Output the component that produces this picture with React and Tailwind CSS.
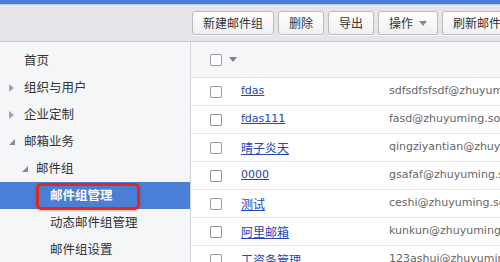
import React from 'react';

const cjk = { fontFamily: '"Noto Sans CJK SC", "Noto Sans", sans-serif' };

function Caret({ className = '' }) {
  return (
    <svg width="8" height="5" viewBox="0 0 8 5" className={className}>
      <path d="M0 0 H8 L4 5 Z" fill="currentColor" />
    </svg>
  );
}

function Arrow({ open }) {
  return open ? (
    <svg width="6" height="6" viewBox="0 0 6 6" className="text-[#8a8d93]">
      <path d="M6 0 V6 H0 Z" fill="currentColor" />
    </svg>
  ) : (
    <svg width="5" height="8" viewBox="0 0 5 8" className="text-[#a3a6ab]">
      <path d="M0 0 L5 4 L0 8 Z" fill="currentColor" />
    </svg>
  );
}

function ToolButton({ children, caret }) {
  return (
    <button className="flex h-[24px] shrink-0 items-center gap-[6px] whitespace-nowrap rounded-[3px] border border-[#b9bbbf] bg-gradient-to-b from-white to-[#eff0f2] px-[10px] text-[12px] text-[#333] shadow-[0_1px_0_rgba(255,255,255,0.8)]">
      {children}
      {caret && <Caret className="text-[#888]" />}
    </button>
  );
}

const navItems = [
  { label: '首页', indent: 'pl-[24px]' },
  { label: '组织与用户', indent: 'pl-[24px]', arrow: 'closed' },
  { label: '企业定制', indent: 'pl-[24px]', arrow: 'closed' },
  { label: '邮箱业务', indent: 'pl-[24px]', arrow: 'open' },
  { label: '邮件组', indent: 'pl-[36px]', arrow: 'open', sub: true },
  { label: '邮件组管理', indent: 'pl-[50px]', active: true },
  { label: '动态邮件组管理', indent: 'pl-[50px]' },
  { label: '邮件组设置', indent: 'pl-[50px]' },
];

const rows = [
  ['fdas', 'sdfsdfsfsdf@zhuyuming.sohu.com'],
  ['fdas111', 'fasd@zhuyuming.sohu.com'],
  ['晴子炎天', 'qingziyantian@zhuyuming.sohu.com'],
  ['0000', 'gsafaf@zhuyuming.sohu.com'],
  ['测试', 'ceshi@zhuyuming.sohu.com'],
  ['阿里邮箱', 'kunkun@zhuyuming.sohu.com'],
  ['工资条管理', '123ashui@zhuyuming.sohu.com'],
];

function Checkbox() {
  return <div className="h-[12px] w-[12px] shrink-0 rounded-[1px] border border-[#9a9da3] bg-white" />;
}

const latin = { fontFamily: '"DejaVu Sans", sans-serif', fontSize: '11px' };

export default function App() {
  return (
    <div className="flex h-[262px] w-[500px] flex-col overflow-hidden bg-white" style={cjk}>
      {/* top blue strip */}
      <div className="h-[4px] shrink-0 bg-[#4b7dd7]" />
      <div className="h-[1px] shrink-0 bg-[#b9c9e6]" />

      {/* toolbar */}
      <div className="flex h-[37px] shrink-0 items-center overflow-hidden border-b border-[#c9cbd0] bg-[#e4e5e9] pl-[192px]">
        <div className="flex shrink-0 gap-[4px]">
          <ToolButton>新建邮件组</ToolButton>
          <ToolButton>删除</ToolButton>
          <ToolButton>导出</ToolButton>
          <ToolButton caret>操作</ToolButton>
          <ToolButton>刷新邮件组</ToolButton>
        </div>
      </div>

      <div className="flex min-h-0 flex-1">
        {/* sidebar */}
        <aside className="w-[191px] shrink-0 border-r border-[#d3d5d9] bg-[#f5f6f8] pt-[5px]">
          {navItems.map((item) => (
            <div
              key={item.label}
              className={`relative flex h-[27px] items-center whitespace-nowrap text-[12.5px] ${item.indent} ${
                item.active ? 'bg-[#4a7ed7] font-semibold text-white' : 'text-[#333]'
              }`}
            >
              {item.arrow && (
                <span className={`absolute top-1/2 flex -translate-y-1/2 ${item.sub ? 'left-[22px]' : 'left-[9px]'}`}>
                  <Arrow open={item.arrow === 'open'} />
                </span>
              )}
              {item.label}
              {item.active && (
                <span className="pointer-events-none absolute left-[36px] top-[1px] h-[27px] w-[104px] rounded-[5px] border-[3px] border-[#e3271f] shadow-[0_1px_2px_rgba(0,0,0,0.25)]" />
              )}
            </div>
          ))}
        </aside>

        {/* list */}
        <main className="min-w-0 flex-1 overflow-hidden">
          <div className="flex h-[36px] items-center gap-[7px] border-b border-[#e4e5e8] bg-[#f6f7f9] pl-[19px]">
            <Checkbox />
            <Caret className="shrink-0 text-[#7d8086]" />
          </div>
          {rows.map(([name, mail]) => (
            <div key={name} className="flex h-[28px] items-center whitespace-nowrap border-b border-[#e7e8ea] pl-[19px]">
              <Checkbox />
              <span
                className="ml-[19px] w-[148px] shrink-0 text-[12px] text-[#2546b4] underline"
                style={/^[\x00-\x7f]+$/.test(name) ? latin : undefined}
              >
                {name}
              </span>
              <span className="shrink-0 text-[#666]" style={latin}>
                {mail}
              </span>
            </div>
          ))}
        </main>
      </div>
    </div>
  );
}
